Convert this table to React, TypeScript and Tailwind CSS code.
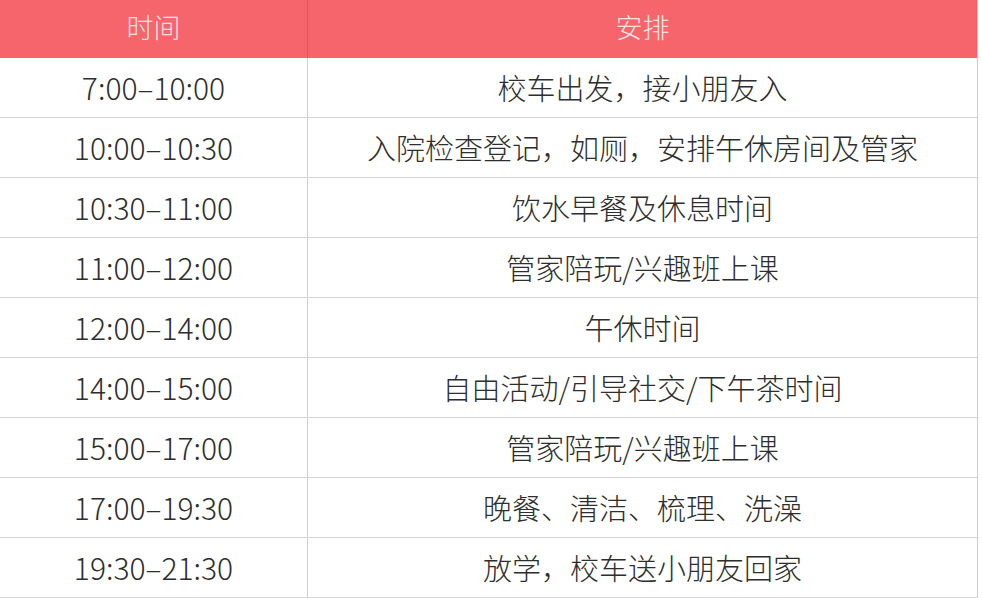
const rows: [string, string][] = [
  ["7:00–10:00", "校车出发，接小朋友入"],
  ["10:00–10:30", "入院检查登记，如厕，安排午休房间及管家"],
  ["10:30–11:00", "饮水早餐及休息时间"],
  ["11:00–12:00", "管家陪玩/兴趣班上课"],
  ["12:00–14:00", "午休时间"],
  ["14:00–15:00", "自由活动/引导社交/下午茶时间"],
  ["15:00–17:00", "管家陪玩/兴趣班上课"],
  ["17:00–19:30", "晚餐、清洁、梳理、洗澡"],
  ["19:30–21:30", "放学，校车送小朋友回家"],
];

export default function App() {
  return (
    <div
      className="h-[598px] w-[982px] overflow-hidden bg-white text-[#2e2e2e]"
      style={{ fontFamily: '"Noto Sans CJK SC", "Noto Sans", sans-serif' }}
    >
      <div className="w-[978px] border-r border-[#cfcfcf]">
        <div className="flex h-[58px] bg-[#f6646c] text-[27px] font-light text-[#fde3e4]">
          <div className="flex w-[308px] items-center justify-center border-r border-[#e2545c] pb-[4px]">时间</div>
          <div className="flex flex-1 items-center justify-center pb-[4px]">安排</div>
        </div>
        {rows.map(([time, plan]) => (
          <div key={time} className="flex h-[60px] border-b border-[#d4d4d4] font-light">
            <div className="flex w-[308px] items-center justify-center border-r border-[#cfcfcf] text-[30px]">
              {time}
            </div>
            <div className="flex flex-1 items-center justify-center text-[29px]">{plan}</div>
          </div>
        ))}
      </div>
    </div>
  );
}
